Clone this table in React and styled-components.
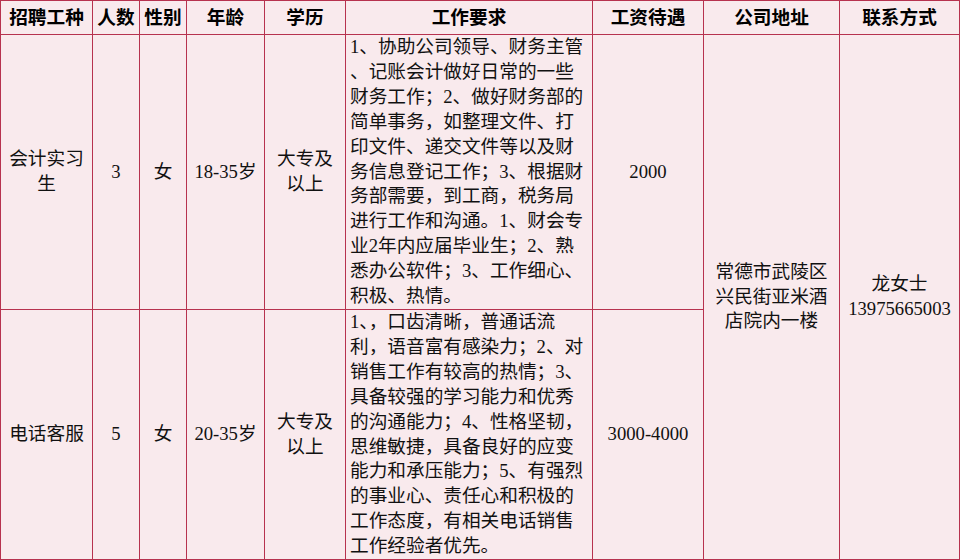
import React from "react";
import styled, { createGlobalStyle } from "styled-components";

const Global = createGlobalStyle`
  html, body { margin: 0; padding: 0; background: #ffffff; }
  body { font-family: "Liberation Serif", "Noto Sans CJK SC", serif; }
`;

const Table = styled.div`
  display: grid;
  width: 960px;
  height: 560px;
  box-sizing: border-box;
  padding: 1px;
  gap: 1px;
  background: #b7324f;
  grid-template-columns: 91px 46px 46px 77px 80px 246px 110px 135px 119px;
  grid-template-rows: 33px 274px 249px;
`;

const Cell = styled.div`
  background: #f9eaed;
  display: flex;
  align-items: center;
  justify-content: ${(p) => (p.$left ? "flex-start" : "center")};
  padding-left: ${(p) => (p.$left ? "4px" : "0")};
  text-align: ${(p) => (p.$left ? "left" : "center")};
  white-space: pre;
  font-family: "Liberation Serif", "Noto Sans CJK SC", serif;
  font-size: 18.67px;
  line-height: 24.9px;
  color: #111;
  grid-row: ${(p) => p.$row || "auto"};
  grid-column: ${(p) => p.$col || "auto"};
  overflow: hidden;
`;

const Head = styled(Cell)`
  font-weight: 700;
  color: #000;
  line-height: 33px;
`;

const heads = ["招聘工种", "人数", "性别", "年龄", "学历", "工作要求", "工资待遇", "公司地址", "联系方式"];

const req1 = `1、协助公司领导、财务主管
、记账会计做好日常的一些
财务工作；2、做好财务部的
简单事务，如整理文件、打
印文件、递交文件等以及财
务信息登记工作；3、根据财
务部需要，到工商，税务局
进行工作和沟通。1、财会专
业2年内应届毕业生；2、熟
悉办公软件；3、工作细心、
积极、热情。`;

const req2 = `1、，口齿清晰，普通话流
利，语音富有感染力；2、对
销售工作有较高的热情；3、
具备较强的学习能力和优秀
的沟通能力；4、性格坚韧，
思维敏捷，具备良好的应变
能力和承压能力；5、有强烈
的事业心、责任心和积极的
工作态度，有相关电话销售
工作经验者优先。`;

export default function App() {
  return (
    <>
      <Global />
      <Table>
        {heads.map((h) => (
          <Head key={h}>{h}</Head>
        ))}
        <Cell $row="2" $col="1">{"会计实习\n生"}</Cell>
        <Cell $row="2" $col="2">3</Cell>
        <Cell $row="2" $col="3">女</Cell>
        <Cell $row="2" $col="4">18-35岁</Cell>
        <Cell $row="2" $col="5">{"大专及\n以上"}</Cell>
        <Cell $row="2" $col="6" $left>{req1}</Cell>
        <Cell $row="2" $col="7">2000</Cell>
        <Cell $row="2 / span 2" $col="8">{"常德市武陵区\n兴民街亚米酒\n店院内一楼"}</Cell>
        <Cell $row="2 / span 2" $col="9">{"龙女士\n13975665003"}</Cell>
        <Cell $row="3" $col="1">电话客服</Cell>
        <Cell $row="3" $col="2">5</Cell>
        <Cell $row="3" $col="3">女</Cell>
        <Cell $row="3" $col="4">20-35岁</Cell>
        <Cell $row="3" $col="5">{"大专及\n以上"}</Cell>
        <Cell $row="3" $col="6" $left>{req2}</Cell>
        <Cell $row="3" $col="7">3000-4000</Cell>
      </Table>
    </>
  );
}
